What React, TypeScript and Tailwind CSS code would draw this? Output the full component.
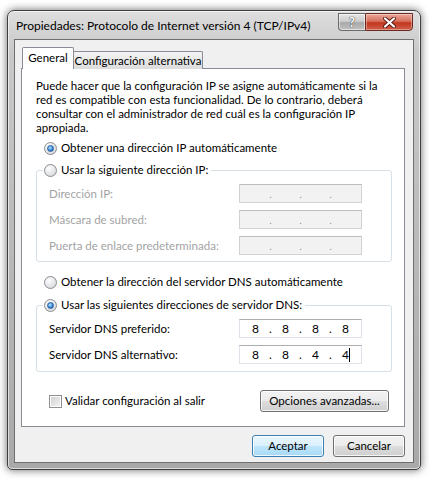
import React from 'react';

const font = { fontFamily: 'Lato, "Noto Sans", "Liberation Sans", sans-serif' };

function Radio({ checked }: { checked?: boolean }) {
  return (
    <div className="w-[13px] h-[13px] rounded-full border border-[#8a8c8f] bg-[radial-gradient(circle_at_35%_30%,#ffffff,#e1e3e6_60%,#c9ccd0)] flex items-center justify-center shrink-0">
      {checked && (
        <div className="w-[7px] h-[7px] rounded-full bg-[radial-gradient(circle_at_40%_35%,#b9e6ff,#3a8fdb_55%,#1b4f9c)] border border-[#2a5d9e]" />
      )}
    </div>
  );
}

function IpBox({ parts, disabled, cursor }: { parts: string[]; disabled?: boolean; cursor?: boolean }) {
  const cells: string[] = [parts[0], '.', parts[1], '.', parts[2], '.', parts[3]];
  return (
    <div
      className={
        'w-[123px] h-[19px] border flex items-center justify-center ' +
        (disabled
          ? 'bg-[#f2f2f2] border-[#d2d2d2] border-t-[#bdbdbd] text-[#a8a8a8]'
          : 'bg-white border-[#dfe2e8] border-t-[#abadb3] text-black')
      }
    >
      {cells.map((c, i) => (
        <div key={i} className="w-[15px] text-center text-[12px] leading-[17px] relative">
          {c === '.' && disabled ? <span className="text-[9px] text-[#8a8a8a]">.</span> : c}
          {cursor && i === 6 && <span className="absolute left-[11px] top-[2px] w-px h-[14px] bg-black" />}
        </div>
      ))}
    </div>
  );
}

function Row({ label, children, disabled }: { label: string; children: React.ReactNode; disabled?: boolean }) {
  return (
    <div className="flex items-center h-[19px]">
      <div className={'w-[190px] whitespace-nowrap ' + (disabled ? 'text-[#a3a3a3]' : 'text-black')}>{label}</div>
      {children}
    </div>
  );
}

function WinButton({ label, primary, className }: { label: string; primary?: boolean; className?: string }) {
  return (
    <div
      className={
        'h-[22px] rounded-[3px] border flex items-center justify-center text-[11.5px] text-black whitespace-nowrap shadow-[inset_0_0_0_1px_rgba(255,255,255,0.8)] ' +
        (primary
          ? 'border-[#3c7fb1] bg-[linear-gradient(#eaf6fd_0%,#d9f0fc_50%,#bee6fd_51%,#a7d9f5_100%)] '
          : 'border-[#707070] bg-[linear-gradient(#f2f2f2_0%,#ebebeb_50%,#dddddd_51%,#cfcfcf_100%)] ') +
        (className ?? '')
      }
    >
      {label}
    </div>
  );
}

export default function App() {
  return (
    <div className="w-[429px] h-[479px] bg-white overflow-hidden pt-[10px] pl-[7px]" style={font}>
      <div className="w-[414px] h-[460px] rounded-t-[7px] rounded-b-[5px] border border-[#3f3f3f] bg-[linear-gradient(#dedede,#c9c9c9_40px,#b6b6b6_60%,#a9a9a9)] shadow-[0_0_9px_rgba(0,0,0,0.6),inset_0_0_0_1px_rgba(255,255,255,0.6)] flex flex-col">
        {/* title bar */}
        <div className="h-[29px] flex justify-between shrink-0">
          <div className="pl-[8px] pt-[6px] text-[12px] text-black leading-[18px] whitespace-nowrap">
            Propiedades: Protocolo de Internet versión 4 (TCP/IPv4)
          </div>
          <div className="flex mt-[2px] mr-[7px] h-[18px]">
            <div className="w-[27px] h-[18px] rounded-bl-[4px] border border-[#6a6a6a] border-r-0 bg-[linear-gradient(#e6e6e6,#cdcdcd_45%,#a9a9a9_55%,#c2c2c2)] flex items-center justify-center shadow-[inset_0_0_0_1px_rgba(255,255,255,0.5)]">
              <span className="text-white font-bold text-[13px] leading-none [text-shadow:0_0_1px_#333,0_0_1px_#333]">?</span>
            </div>
            <div className="w-[48px] h-[18px] rounded-br-[4px] border border-[#6b2a22] bg-[linear-gradient(#e9a99c,#d7705d_45%,#c2361f_55%,#d2604a)] flex items-center justify-center shadow-[inset_0_0_0_1px_rgba(255,255,255,0.35)]">
              <svg width="13" height="11" viewBox="0 0 13 11">
                <path d="M2 1.5 L11 9.5 M11 1.5 L2 9.5" stroke="#5a1a12" strokeWidth="4" strokeLinecap="round" />
                <path d="M2 1.5 L11 9.5 M11 1.5 L2 9.5" stroke="#ffffff" strokeWidth="2.2" strokeLinecap="round" />
              </svg>
            </div>
          </div>
        </div>

        {/* client area */}
        <div className="mx-[7px] h-[422px] bg-[#f0f0f0] shadow-[0_0_0_1px_#6f6f6f] pt-[7px] pl-[6px] pr-[8px] flex flex-col text-[11.5px]">
          {/* tabs */}
          <div className="flex items-end h-[22px] pl-[1px] relative z-10 -mb-px whitespace-nowrap">
            <div className="h-[22px] w-[52px] bg-white border border-b-0 border-[#898c95] rounded-t-[2px] flex items-center justify-center text-black pb-[1px]">
              General
            </div>
            <div className="h-[18px] w-[130px] -ml-px border border-b-0 border-[#898c95] rounded-t-[2px] bg-[linear-gradient(#f4f4f4,#e8e8e8_50%,#dcdcdc)] flex items-center justify-center text-black">
              Configuración alternativa
            </div>
          </div>

          {/* tab panel */}
          <div className="h-[359px] bg-white border border-[#898c95] pt-[10px] pl-[14px] pr-[12px] flex flex-col text-black whitespace-nowrap">
            <p className="leading-[14px]">
              Puede hacer que la configuración IP se asigne automáticamente si la
              <br />
              red es compatible con esta funcionalidad. De lo contrario, deberá
              <br />
              consultar con el administrador de red cuál es la configuración IP
              <br />
              apropiada.
            </p>

            <div className="mt-[5px] h-[16px] flex items-center gap-[4px] ml-[8px]">
              <Radio checked />
              <span>Obtener una dirección IP automáticamente</span>
            </div>

            <fieldset className="mt-[6px] border border-[#d5dfe5] rounded-[3px]">
              <legend className="ml-[6px] px-[1px]">
                <div className="h-[16px] flex items-center gap-[4px] pr-[2px]">
                  <Radio />
                  <span>Usar la siguiente dirección IP:</span>
                </div>
              </legend>
              <div className="pl-[12px] pt-[6px] pb-[6px] flex flex-col gap-[7px]">
                <Row label="Dirección IP:" disabled>
                  <IpBox parts={['', '', '', '']} disabled />
                </Row>
                <Row label="Máscara de subred:" disabled>
                  <IpBox parts={['', '', '', '']} disabled />
                </Row>
                <Row label="Puerta de enlace predeterminada:" disabled>
                  <IpBox parts={['', '', '', '']} disabled />
                </Row>
              </div>
            </fieldset>

            <div className="mt-[12px] h-[16px] flex items-center gap-[4px] ml-[8px]">
              <Radio />
              <span>Obtener la dirección del servidor DNS automáticamente</span>
            </div>

            <fieldset className="mt-[7px] border border-[#d5dfe5] rounded-[3px]">
              <legend className="ml-[6px] px-[1px]">
                <div className="h-[16px] flex items-center gap-[4px] pr-[2px]">
                  <Radio checked />
                  <span>Usar las siguientes direcciones de servidor DNS:</span>
                </div>
              </legend>
              <div className="pl-[12px] pt-[6px] pb-[7px] flex flex-col gap-[7px]">
                <Row label="Servidor DNS preferido:">
                  <IpBox parts={['8', '8', '8', '8']} />
                </Row>
                <Row label="Servidor DNS alternativo:">
                  <IpBox parts={['8', '8', '4', '4']} cursor />
                </Row>
              </div>
            </fieldset>

            <div className="mt-[18px] flex items-center justify-between pl-[13px] pr-[3px]">
              <div className="flex items-center gap-[3px]">
                <div className="w-[13px] h-[13px] border border-[#8e8f8f] bg-[linear-gradient(135deg,#d0d0d0,#f4f4f4)] shadow-[inset_0_0_0_1px_#ffffff]" />
                <span>Validar configuración al salir</span>
              </div>
              <WinButton label="Opciones avanzadas..." className="w-[129px]" />
            </div>
          </div>

          {/* bottom buttons */}
          <div className="mt-[8px] flex justify-end gap-[9px]">
            <WinButton label="Aceptar" primary className="w-[72px]" />
            <WinButton label="Cancelar" className="w-[72px]" />
          </div>
        </div>
      </div>
    </div>
  );
}
